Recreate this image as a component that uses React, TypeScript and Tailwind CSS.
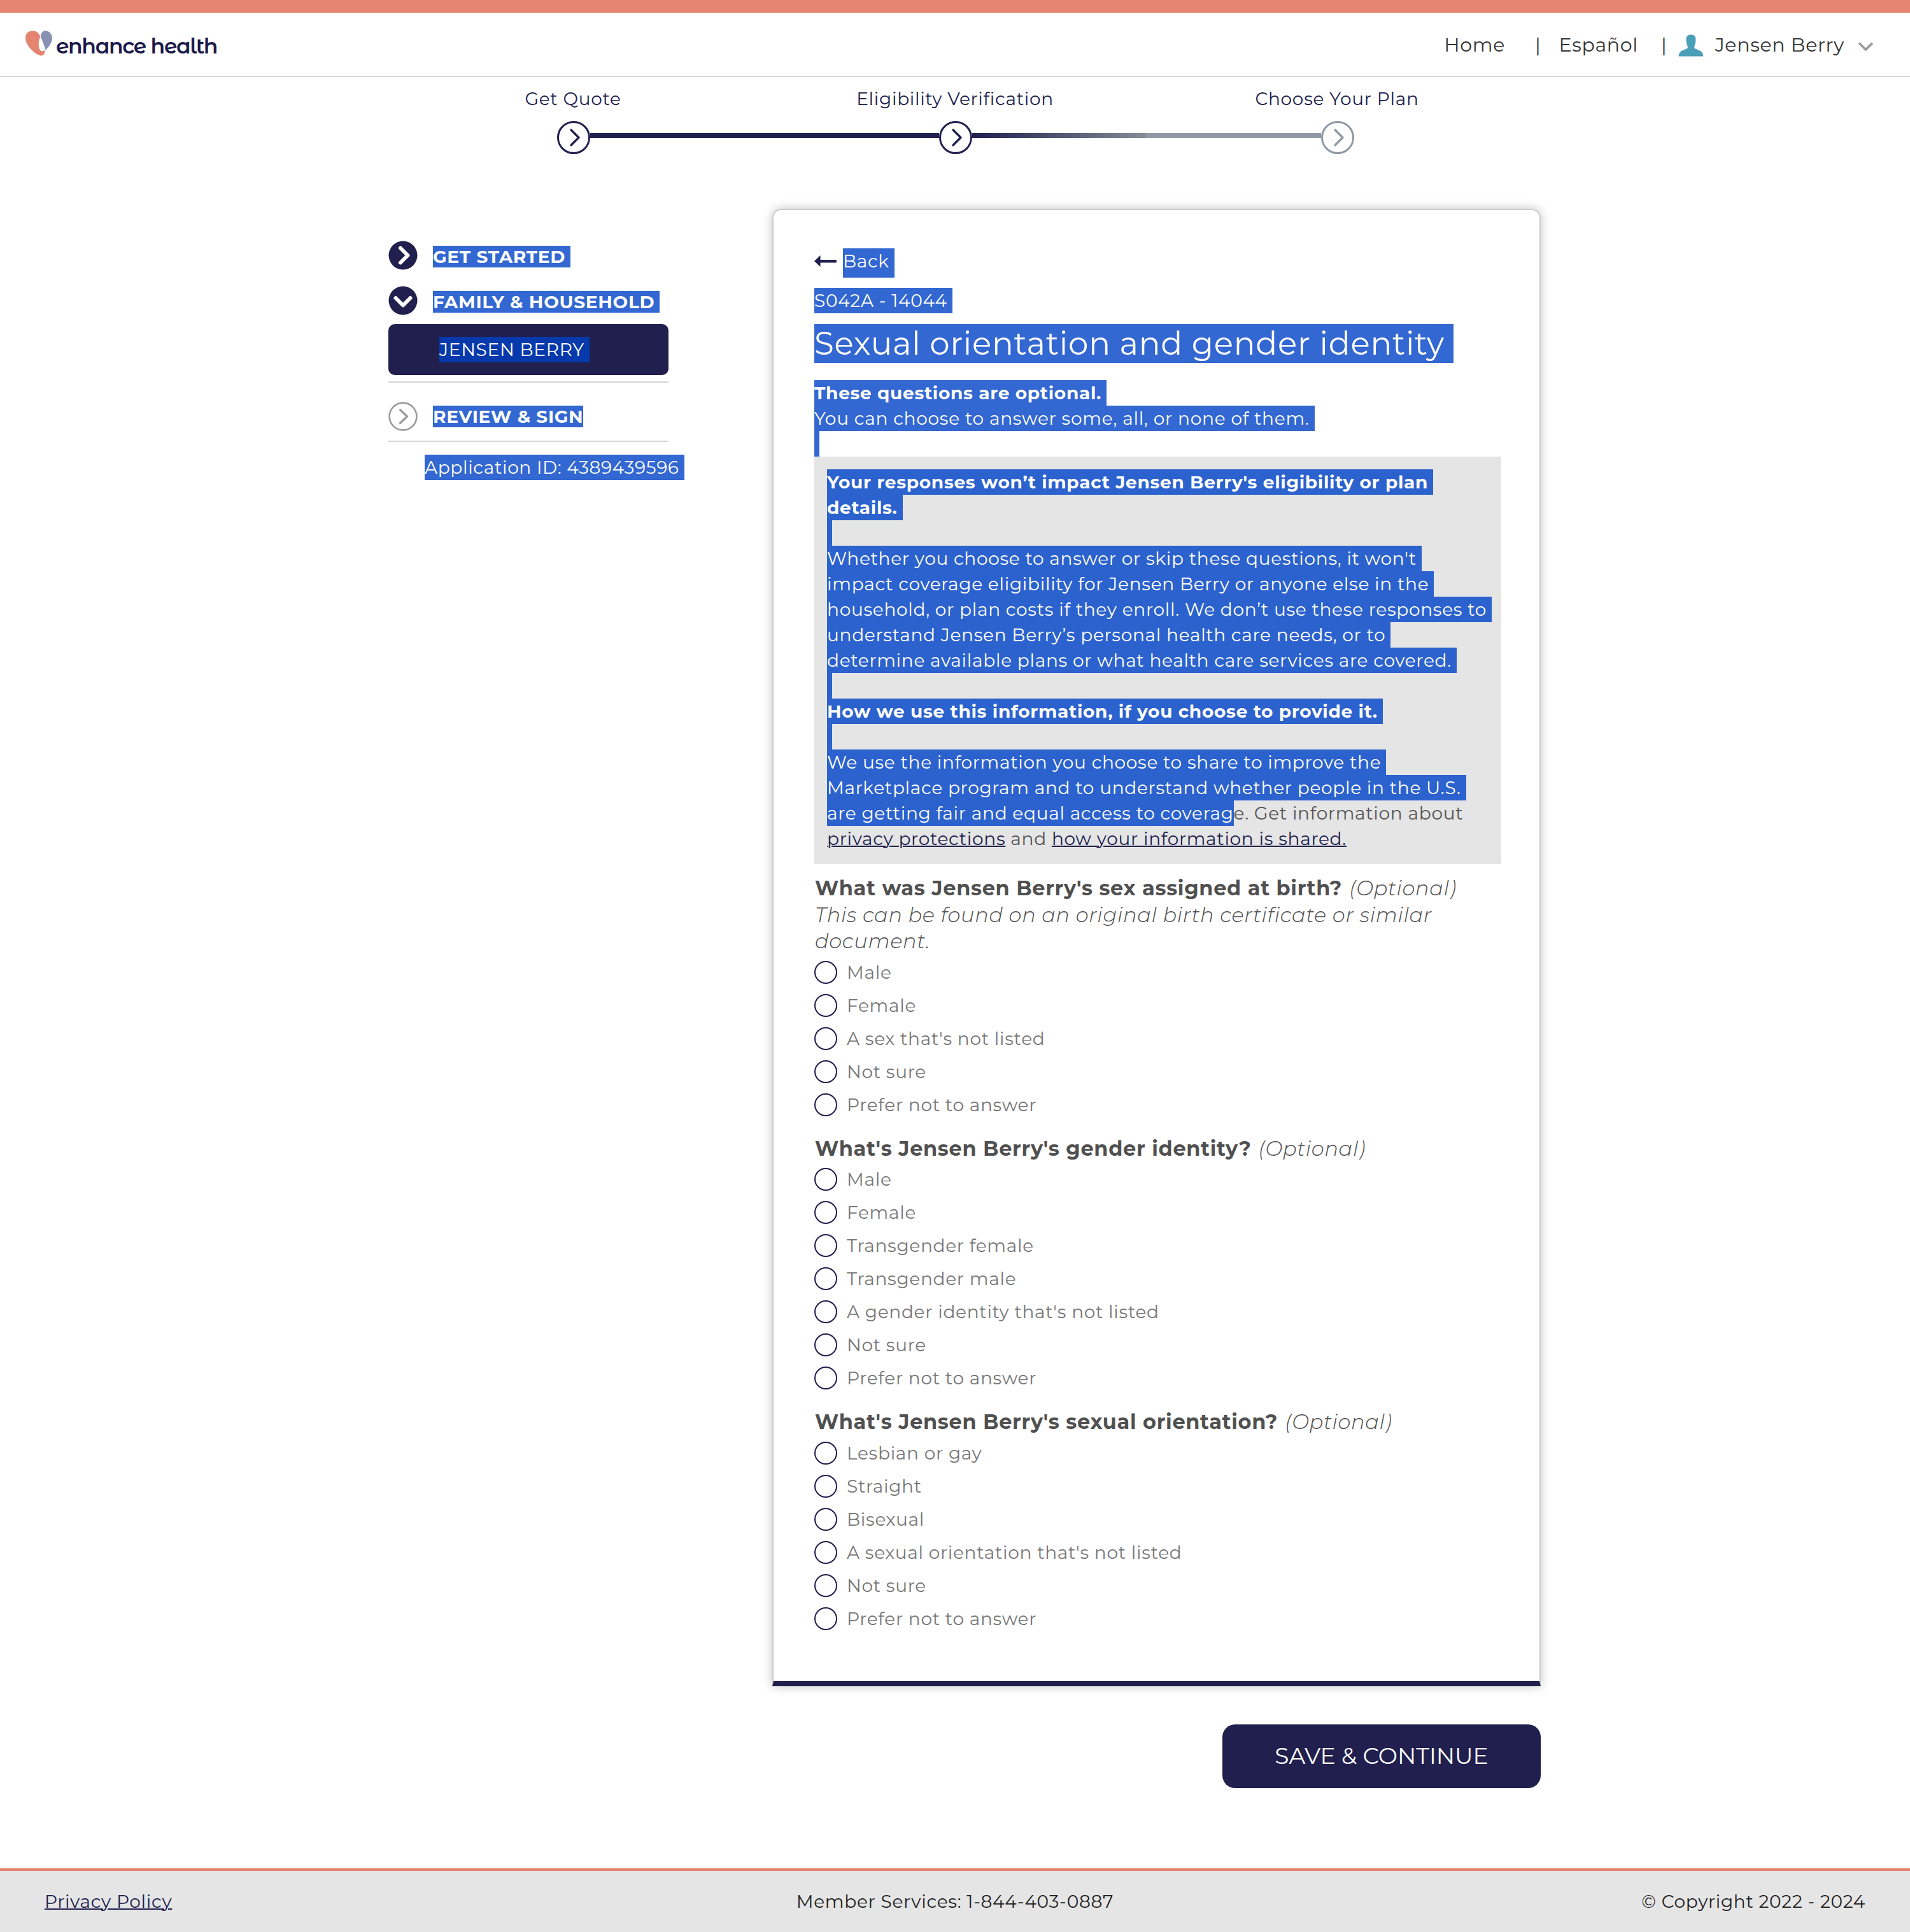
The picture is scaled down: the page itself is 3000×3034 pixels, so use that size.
import React from "react";

const NAVY = "#211f4e";

function StepIcon({ color }: { color: string }) {
  return (
    <svg className="block h-[52px] w-[52px] shrink-0" viewBox="0 0 52 52" fill="none" stroke={color}>
      <circle cx="26" cy="26" r="24.5" strokeWidth="3" />
      <path d="M22 14 34 26 22 38" strokeWidth="3.4" strokeLinecap="round" strokeLinejoin="round" />
    </svg>
  );
}

function Selected({ children, className = "" }: { children?: React.ReactNode; className?: string }) {
  return <div className={`w-fit whitespace-nowrap pr-2 text-white ${className}`}>{children}</div>;
}

function BoxLine({ children, bold = false }: { children?: React.ReactNode; bold?: boolean }) {
  return (
    <div className={`h-10 w-fit whitespace-nowrap bg-[#2c62cd] pr-2 text-white ${bold ? "font-bold" : ""}`}>
      {children}
    </div>
  );
}

function Question({ title, note, options }: { title: string; note?: string; options: string[] }) {
  return (
    <section>
      <h2 className="pl-px text-[32px] leading-[41.6px] text-[#505050]">
        <b className="font-bold">{title}</b> <i className="ml-0.5 font-light">(Optional)</i>
        {note && <i className="block font-light">{note}</i>}
      </h2>
      <div className="mt-[2.2px]">
        {options.map((o) => (
          <label key={o} className="flex h-[52px] items-center text-[#777]">
            <span className="size-9 rounded-full border-2 border-[#211f4e]" />
            <span className="ml-[15px]">{o}</span>
          </label>
        ))}
      </div>
    </section>
  );
}

export default function App() {
  return (
    <div className="flex h-[3034px] w-[3000px] flex-col bg-white font-[Montserrat,'Open_Sans',sans-serif] text-[28px] leading-10 tracking-[0.7px] text-[#555]">
      <div className="h-5 shrink-0 bg-[#e58571]" />
      <header className="flex h-[101px] shrink-0 items-center justify-between border-b-2 border-[#d8d8d8] pl-10 pr-[58px]">
        <div className="flex items-center">
          <svg className="mb-1 block h-10 w-[42px]" viewBox="0 0 42 40">
            <path d="M11 .6C18 .2 21.500 5 23.300 9.500 20.500 16 19.800 24 22.500 30.500 25 33.500 29 32 30.500 30.500 31.200 36 28 39.800 24 39.400 14 37 0 23 0 11.500 0 4 5 .8 11 .6Z" fill="#e58571" />
            <path d="M30 .2C37 -.3 42 5 42 12 41.500 20 36 26.500 31.500 30.500 29.500 22 26 15 23.700 9.500 24.500 5 26.500 1 30 .2Z" fill="#8890b3" />
          </svg>
          <span className="ml-1.5 mt-1 font-[Montserrat_Alternates,Montserrat,sans-serif] text-[33px] font-semibold tracking-[-1.4px] text-[#1c1a4b]">enhance health</span>
        </div>
        <nav className="flex items-center pt-0.5 text-[30px] text-[#333]">
          <span>Home</span>
          <span className="ml-[47px]">|</span>
          <span className="ml-7">Español</span>
          <span className="ml-9">|</span>
          <svg className="ml-[18px] mt-0.5 block h-[35px] w-[38px]" viewBox="0 0 38 35" fill="#4a9fb8">
            <path d="M19 .5c5 0 7.500 2.500 7.500 7 0 4-.5 7-1.500 9.500-1.500 3-1 5 1.500 6 5 1.600 11.500 3.500 11.500 10v1.500H0V33c0-6.500 6.500-8.400 11.500-10 2.500-1 3-3 1.500-6-1-2.500-1.500-5.500-1.500-9.500 0-4.500 2.500-7 7.500-7Z" />
          </svg>
          <span className="ml-[19px]">Jensen Berry</span>
          <svg className="ml-[22px] mt-[5px] block h-3.5 w-[23px]" viewBox="0 0 23 14" fill="none" stroke="#999" strokeWidth="3.600">
            <path d="M1 1.500 11.500 12 22 1.500" />
          </svg>
        </nav>
      </header>

      <div className="mx-auto mt-3.5 grid w-[1800px] grid-cols-3 text-center text-[#211f4e]">
        <span>Get Quote</span>
        <span>Eligibility Verification</span>
        <span>Choose Your Plan</span>
      </div>
      <div className="ml-[875px] mt-[15px] flex items-center">
        <StepIcon color={NAVY} />
        <div className="mb-1.5 h-2 w-[548px] bg-[#211f4e]" />
        <StepIcon color={NAVY} />
        <div className="mb-1.5 h-2 w-[273px] bg-linear-to-r from-[#211f4e] to-[#868d94]" />
        <div className="mb-1.5 h-2 w-[275px] bg-[#8f99a5]" />
        <StepIcon color="#8f99a5" />
      </div>

      <main className="ml-[610px] mt-[86px] flex items-start">
        <aside className="w-[603px] pt-[50px]">
          <div className="flex h-[45px] items-center">
            <svg className="block size-[46px]" viewBox="0 0 46 46" fill="none">
              <circle cx="23" cy="23" r="22.500" fill={NAVY} />
              <path d="M19 11.500 30.500 23 19 34.500" stroke="#fff" strokeWidth="6" strokeLinecap="round" strokeLinejoin="round" />
            </svg>
            <Selected className="ml-6 mt-[5px] bg-[#3367d1] font-bold leading-[34px]">GET STARTED</Selected>
          </div>
          <div className="mt-[26px] flex h-[45px] items-center">
            <svg className="block size-[46px]" viewBox="0 0 46 46" fill="none">
              <circle cx="23" cy="23" r="22.500" fill={NAVY} />
              <path d="M11.500 19 23 30.500 34.500 19" stroke="#fff" strokeWidth="6" strokeLinecap="round" strokeLinejoin="round" />
            </svg>
            <Selected className="ml-6 mt-[5px] bg-[#3367d1] font-bold leading-[34px]">FAMILY &amp; HOUSEHOLD</Selected>
          </div>
          <div className="mt-[15px] flex h-20 w-[440px] items-center rounded-[10px] bg-[#211f4e] pl-20">
            <Selected className="bg-[#0639ab]">JENSEN BERRY</Selected>
          </div>
          <div className="mt-2.5 h-0.5 w-[440px] bg-[#d4d4d4]" />
          <div className="mt-[30px] flex h-[46px] items-center">
            <svg className="block size-[46px]" viewBox="0 0 46 46" fill="none" stroke="#9b9b9b">
              <circle cx="23" cy="23" r="21.400" strokeWidth="2.600" />
              <path d="M18.500 12.500 29.500 23 18.500 33.500" strokeWidth="3.200" strokeLinecap="round" strokeLinejoin="round" />
            </svg>
            <div className="ml-6 bg-[#3367d1] font-bold leading-[34px] text-white">REVIEW &amp; SIGN</div>
          </div>
          <div className="mt-[15px] h-0.5 w-[440px] bg-[#d4d4d4]" />
          <Selected className="ml-[57px] mt-5 bg-[#3367d1] tracking-[0.65px]">Application ID: 4389439596</Selected>
        </aside>

        <div className="flex w-[1207px] flex-col items-end">
          <article className="h-[2320px] w-full rounded-t-[14px] border-2 border-b-8 border-[#ccc] border-b-[#211f4e] pl-16 pr-15 pt-15 shadow-[0_0_16px_rgba(0,0,0,0.25)]">
            <div className="flex">
              <svg className="mt-[11px] block h-[18px] w-[35px]" viewBox="0 0 35 18" fill={NAVY}>
                <path d="M0 9 9.500 0v18Z" />
                <rect x="7" y="7" width="28" height="4.500" rx="1.500" />
              </svg>
              <Selected className="ml-2.5 bg-[#3367d1] pb-1.5">Back</Selected>
            </div>
            <Selected className="mt-4 bg-[#3367d1]">S042A - 14044</Selected>
            <h1 className="mt-[17px] w-fit whitespace-nowrap bg-[#3367d1] pr-3.5 text-[50px] leading-[61px] tracking-[0.75px] text-white">Sexual orientation and gender identity</h1>
            <Selected className="mt-[27px] bg-[#3367d1] font-bold">These questions are optional.</Selected>
            <Selected className="bg-[#3367d1] tracking-[0.74px]">You can choose to answer some, all, or none of them.</Selected>
            <Selected className="h-10 bg-[#3367d1]" />
            <div className="bg-[#e5e5e5] p-5">
              <BoxLine bold>Your responses won’t impact Jensen Berry's eligibility or plan</BoxLine>
              <BoxLine bold>details.</BoxLine>
              <BoxLine />
              <BoxLine>Whether you choose to answer or skip these questions, it won't</BoxLine>
              <BoxLine>impact coverage eligibility for Jensen Berry or anyone else in the</BoxLine>
              <BoxLine>household, or plan costs if they enroll. We don’t use these responses to</BoxLine>
              <BoxLine>understand Jensen Berry’s personal health care needs, or to</BoxLine>
              <BoxLine>determine available plans or what health care services are covered.</BoxLine>
              <BoxLine />
              <BoxLine bold>How we use this information, if you choose to provide it.</BoxLine>
              <BoxLine />
              <BoxLine>We use the information you choose to share to improve the</BoxLine>
              <BoxLine>Marketplace program and to understand whether people in the U.S.</BoxLine>
              <div className="flex h-10 whitespace-nowrap">
                <span className="bg-[#2c62cd] text-white">are getting fair and equal access to coverag</span>
                <span>e. Get information about</span>
              </div>
              <div className="h-10 whitespace-nowrap">
                <a className="text-[#211f4e] underline decoration-2">privacy protections</a> and{" "}
                <a className="text-[#211f4e] underline decoration-2">how your information is shared.</a>
              </div>
            </div>
            <div className="mt-[17px] flex flex-col gap-[21.6px]">
              <Question
                title="What was Jensen Berry's sex assigned at birth?"
                note="This can be found on an original birth certificate or similar document."
                options={["Male", "Female", "A sex that's not listed", "Not sure", "Prefer not to answer"]}
              />
              <Question
                title="What's Jensen Berry's gender identity?"
                options={["Male", "Female", "Transgender female", "Transgender male", "A gender identity that's not listed", "Not sure", "Prefer not to answer"]}
              />
              <Question
                title="What's Jensen Berry's sexual orientation?"
                options={["Lesbian or gay", "Straight", "Bisexual", "A sexual orientation that's not listed", "Not sure", "Prefer not to answer"]}
              />
            </div>
          </article>
          <button className="mt-[60px] h-[100px] w-[500px] rounded-[20px] bg-[#211f4e] pb-0.5 text-[36px] tracking-normal text-white">SAVE &amp; CONTINUE</button>
        </div>
      </main>

      <footer className="mt-auto grid h-[100px] shrink-0 grid-cols-3 items-center border-t-4 border-[#e2836c] bg-[#e5e5e5] px-[70px] text-[#222]">
        <a className="text-[#211f4e] underline decoration-2">Privacy Policy</a>
        <span className="text-center">Member Services: 1-844-403-0887</span>
        <span className="text-right">© Copyright 2022 - 2024</span>
      </footer>
    </div>
  );
}
